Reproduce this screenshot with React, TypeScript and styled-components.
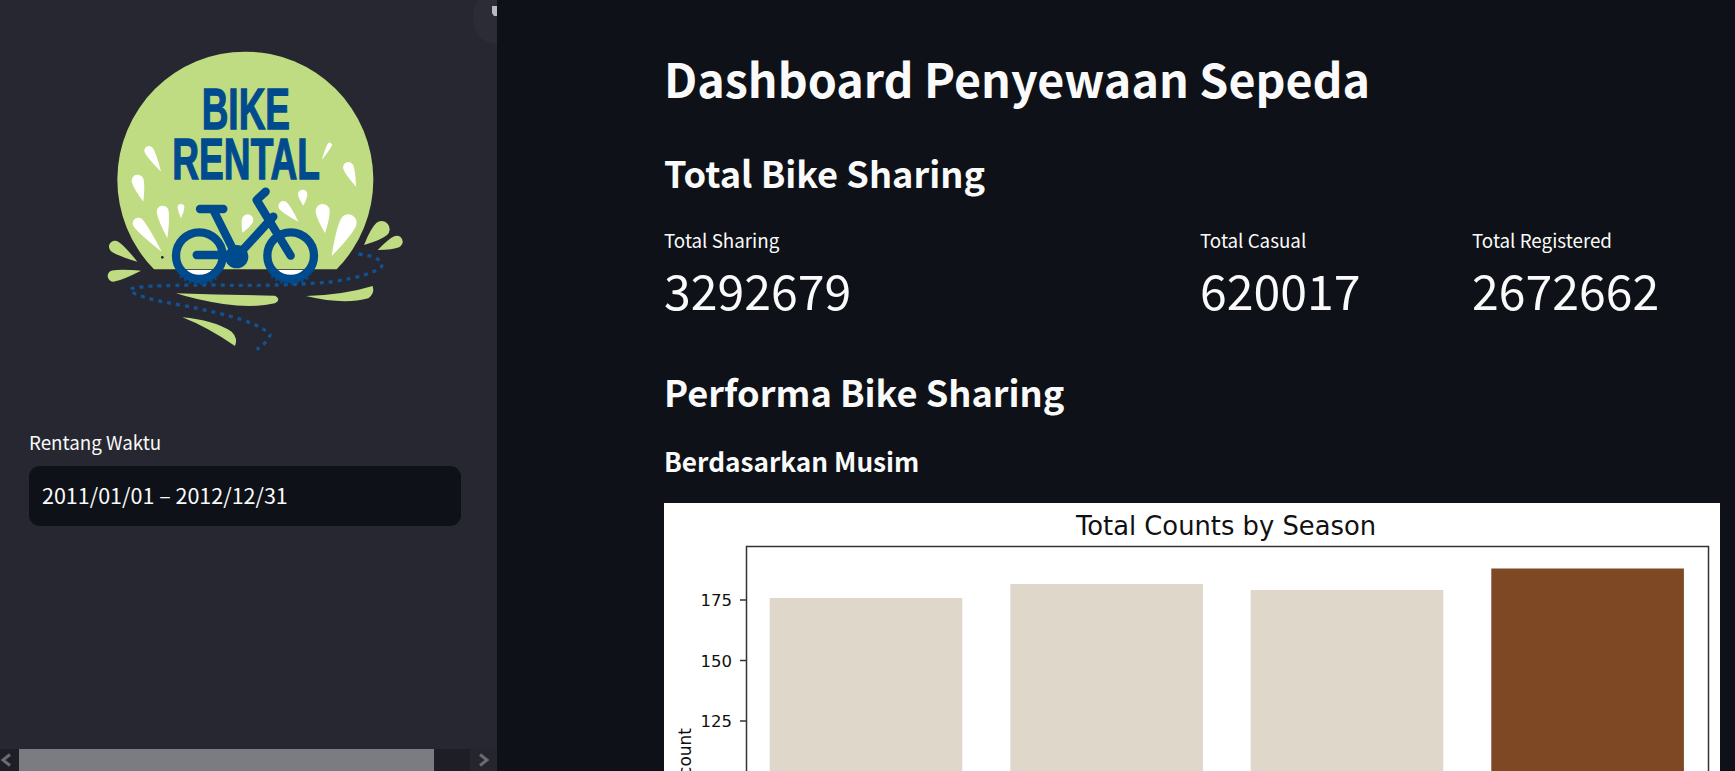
import React from 'react';
import styled, { createGlobalStyle } from 'styled-components';

const GlobalStyle = createGlobalStyle`
  html, body {
    margin: 0;
    height: 100%;
    overflow: hidden;
    background: #0e1117;
  }
  * { box-sizing: border-box; }
`;

const Page = styled.div`
  width: 100%;
  height: 100vh;
  display: flex;
  overflow: hidden;
  color: #fafafa;
  font-family: 'Noto Sans CJK SC', 'Noto Sans', sans-serif;
`;

const Sidebar = styled.aside`
  position: relative;
  flex: 0 0 497px;
  height: 100%;
  display: flex;
  flex-direction: column;
  padding: 30px 36px 0 29px;
  background: #262730;
`;

const CollapseButton = styled.div`
  position: absolute;
  top: -8px;
  right: 0;
  width: 24px;
  height: 52px;
  border-radius: 26px 0 0 26px;
  background: #2b2c36;

  &::after {
    content: '';
    position: absolute;
    top: 14px;
    right: 0;
    width: 5px;
    height: 10px;
    background: #b9b9bf;
    clip-path: polygon(0 0, 100% 0, 100% 100%, 40% 100%, 0 70%);
  }
`;

const LogoWrap = styled.div`
  margin-left: 51px;
  height: 340px;
`;

const FieldLabel = styled.label`
  margin-top: 59px;
  font-size: 18.8px;
  line-height: 26px;
`;

const DateInput = styled.div`
  margin-top: 11px;
  width: 432px;
  height: 60px;
  display: flex;
  align-items: center;
  padding: 0 0 4px 13px;
  border-radius: 11px;
  background: #0e1117;
  font-size: 21.5px;
`;

const ScrollBar = styled.div`
  position: absolute;
  left: 0;
  right: 0;
  bottom: 0;
  height: 22px;
  display: flex;
  align-items: center;
  background: #1e1f26;
`;

const ScrollButton = styled.div<{ $wide?: boolean }>`
  flex: 0 0 ${(p) => (p.$wide ? 27 : 19)}px;
  height: 100%;
  display: flex;
  align-items: center;
  justify-content: ${(p) => (p.$wide ? 'center' : 'flex-start')};
  background: ${(p) => (p.$wide ? '#24252d' : '#1e1f26')};
`;

const ScrollThumb = styled.div`
  flex: 0 0 415px;
  height: 100%;
  background: #7b7b82;
`;

const ScrollTrack = styled.div`
  flex: 1;
`;

const Main = styled.main`
  flex: 1;
  min-width: 0;
  height: 100%;
  overflow: hidden;
  padding: 39px 15px 0 167px;
`;

const Title = styled.h1`
  margin: 0;
  font-size: 46.6px;
  font-weight: 600;
  line-height: 78px;
`;

const SectionTitle = styled.h2<{ $top: number }>`
  margin: ${(p) => p.$top}px 0 0;
  font-size: 36.2px;
  font-weight: 600;
  line-height: 58px;
`;

const SubTitle = styled.h3`
  margin: 22px 0 0;
  font-size: 26.2px;
  font-weight: 600;
  line-height: 38px;
`;

const Metrics = styled.div`
  display: grid;
  grid-template-columns: 536px 272px 1fr;
  margin-top: 26px;
`;

const Metric = styled.div`
  display: flex;
  flex-direction: column;
`;

const MetricLabel = styled.div`
  font-size: 18.8px;
  line-height: 26px;
`;

const MetricValue = styled.div`
  margin-top: 1px;
  font-size: 48.2px;
  line-height: 70px;
`;

const ChartPanel = styled.div`
  margin-top: 23px;
  width: 1056px;
  background: #fff;
`;

const ChartSvg = styled.svg`
  display: block;
  font-family: 'DejaVu Sans', sans-serif;
`;

type Drop = [number, number, number, number, number];

// tip x, tip y, bulb x, bulb y, bulb radius
const whiteDrops: Drop[] = [
  [243, 425, 207, 362, 14],
  [190, 515, 173, 452, 18],
  [262, 625, 248, 545, 18],
  [303, 565, 303, 532, 10],
  [245, 665, 175, 580, 17],
  [487, 608, 503, 570, 17],
  [725, 390, 749, 345, 7],
  [828, 470, 805, 412, 16],
  [670, 527, 668, 493, 14],
  [655, 575, 610, 528, 15],
  [735, 610, 728, 543, 21],
  [755, 678, 805, 578, 25],
];

const greenDrops: Drop[] = [
  [852, 645, 905, 597, 24],
  [893, 660, 950, 635, 18],
  [172, 695, 105, 650, 18],
  [183, 722, 100, 738, 17],
];

const dropPath = ([tx, ty, bx, by, r]: Drop) => {
  const dx = bx - tx;
  const dy = by - ty;
  const len = Math.hypot(dx, dy);
  const nx = -dy / len;
  const ny = dx / len;
  const ax = bx + nx * r;
  const ay = by + ny * r;
  const cx = bx - nx * r;
  const cy = by - ny * r;
  return `M${tx} ${ty} Q${ax - dx * 0.3} ${ay - dy * 0.3} ${ax} ${ay} A${r} ${r} 0 0 0 ${cx} ${cy} Q${cx - dx * 0.3} ${cy - dy * 0.3} ${tx} ${ty}Z`;
};

const Logo = () => {
  const green = '#bfdc82';
  const blue = '#004b8d';
  return (
    <svg width="350" height="340" viewBox="0 0 1050 1020">
      <path d="M222 718 A384 384 0 1 1 770 718 Z" fill={green} />
      <text x="365" y="297" fontFamily="'Liberation Sans', sans-serif" fontWeight="700" fontSize="172" fill={blue} stroke={blue} strokeWidth="4" textLength="265" lengthAdjust="spacingAndGlyphs">BIKE</text>
      <text x="277" y="447" fontFamily="'Liberation Sans', sans-serif" fontWeight="700" fontSize="170" fill={blue} stroke={blue} strokeWidth="4" textLength="443" lengthAdjust="spacingAndGlyphs">RENTAL</text>
      {whiteDrops.map((d) => <path key={d.join()} d={dropPath(d)} fill="#fff" />)}
      {greenDrops.map((d) => <path key={d.join()} d={dropPath(d)} fill={green} />)}
      <path d="M288 790 Q440 795 585 797 Q605 808 585 820 Q520 835 430 822 Q350 810 288 790Z" fill={green} />
      <path d="M678 798 Q790 795 878 768 Q885 790 865 805 Q790 825 678 798Z" fill={green} />
      <path d="M307 862 Q400 870 455 905 Q475 925 465 948 Q380 890 307 862Z" fill={green} />
      <path d="M835 672 Q910 680 905 710 Q880 735 760 755 Q600 770 400 765 Q150 765 150 780 Q160 800 300 825 Q540 870 570 915 Q560 940 530 958" fill="none" stroke="#14528f" strokeWidth="10" strokeDasharray="12 15" />
      <path d="M318 720 A59 59 0 0 0 398 720Z M592 720 A59 59 0 0 0 672 720Z" fill="#fff" />
      <g fill="none" stroke={blue} strokeWidth="25" strokeLinecap="round" strokeLinejoin="round">
        <circle cx="358" cy="677" r="70" />
        <circle cx="632" cy="677" r="70" />
        <path d="M360 537 H430" />
        <path d="M400 540 L470 680 L580 560" />
        <path d="M350 675 H470" />
        <path d="M557 485 L530 510 L632 677" />
      </g>
      <path d="M300 738 A84 84 0 0 0 416 738 M574 738 A84 84 0 0 0 690 738" fill="none" stroke={blue} strokeWidth="8" strokeDasharray="7 9" />
      <circle cx="470" cy="680" r="35" fill={blue} />
      <circle cx="247" cy="682" r="4" fill="#22222a" />
    </svg>
  );
};

const bars = [
  { x: 105.7, top: 95, color: '#dfd7ca' },
  { x: 346.3, top: 81, color: '#dfd7ca' },
  { x: 586.7, top: 87, color: '#dfd7ca' },
  { x: 827.3, top: 65.5, color: '#7d4823' },
];

const ticks = [
  { y: 97, label: '175' },
  { y: 157.5, label: '150' },
  { y: 218, label: '125' },
];

const Chart = () => (
  <ChartSvg width="1056" height="268" viewBox="0 0 1056 268">
    <text x="562" y="32" fontSize="25.8" textAnchor="middle" fill="#111">Total Counts by Season</text>
    {bars.map((b) => <rect key={b.x} x={b.x} y={b.top} width="192.6" height={268 - b.top} fill={b.color} />)}
    <rect x="82.5" y="43.5" width="962" height="300" fill="none" stroke="#333" strokeWidth="1.5" />
    {ticks.map((t) => (
      <g key={t.label}>
        <line x1="76" x2="82" y1={t.y} y2={t.y} stroke="#333" strokeWidth="1.5" />
        <text x="68" y={t.y + 6} fontSize="16.5" textAnchor="end" fill="#111">{t.label}</text>
      </g>
    ))}
    <text transform="translate(27 225) rotate(-90)" textAnchor="end" fontSize="17" fill="#111">count</text>
  </ChartSvg>
);

const Chevron = ({ left }: { left?: boolean }) => (
  <svg width="12" height="14" viewBox="0 0 12 14">
    <path d={left ? 'M10 1.5 L3 7 L10 12.5' : 'M2 1.5 L9 7 L2 12.5'} fill="none" stroke="#6a6a70" strokeWidth="3" />
  </svg>
);

const metrics = [
  { label: 'Total Sharing', value: '3292679' },
  { label: 'Total Casual', value: '620017' },
  { label: 'Total Registered', value: '2672662' },
];

export default function App() {
  return (
    <Page>
      <GlobalStyle />
      <Sidebar>
        <CollapseButton />
        <LogoWrap>
          <Logo />
        </LogoWrap>
        <FieldLabel>Rentang Waktu</FieldLabel>
        <DateInput>2011/01/01 – 2012/12/31</DateInput>
        <ScrollBar>
          <ScrollButton><Chevron left /></ScrollButton>
          <ScrollThumb />
          <ScrollTrack />
          <ScrollButton $wide><Chevron /></ScrollButton>
        </ScrollBar>
      </Sidebar>
      <Main>
        <Title>Dashboard Penyewaan Sepeda</Title>
        <SectionTitle $top={26}>Total Bike Sharing</SectionTitle>
        <Metrics>
          {metrics.map((m) => (
            <Metric key={m.label}>
              <MetricLabel>{m.label}</MetricLabel>
              <MetricValue>{m.value}</MetricValue>
            </Metric>
          ))}
        </Metrics>
        <SectionTitle $top={38}>Performa Bike Sharing</SectionTitle>
        <SubTitle>Berdasarkan Musim</SubTitle>
        <ChartPanel>
          <Chart />
        </ChartPanel>
      </Main>
    </Page>
  );
}
